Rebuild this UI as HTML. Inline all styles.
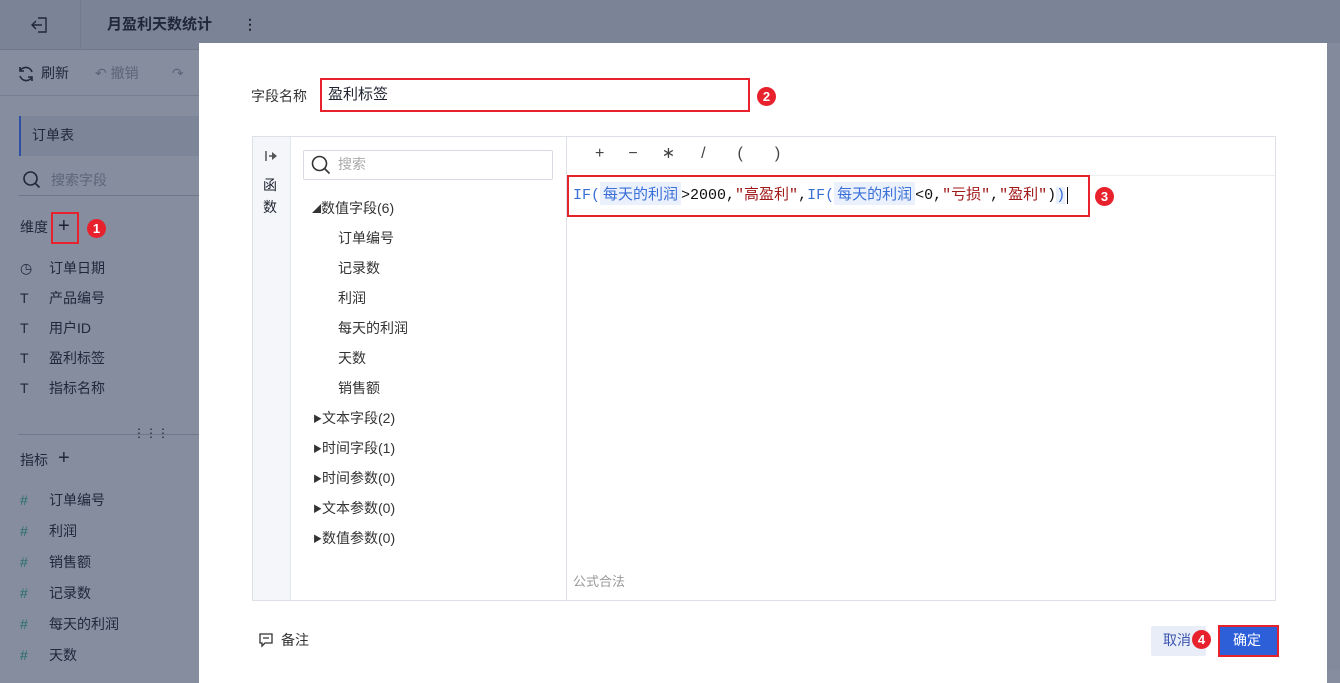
<!DOCTYPE html>
<html><head><meta charset="utf-8"><style>
*{box-sizing:border-box;margin:0;padding:0}
body{width:1340px;height:670px;overflow:hidden;position:relative;background:#858d9f;font-family:"Liberation Sans","Noto Sans CJK SC",sans-serif;font-size:14px;color:#1f2330}
.a{position:absolute}
.t{position:absolute;white-space:nowrap;line-height:20px}
.badge{position:absolute;width:19px;height:19px;border-radius:50%;background:#e8222d;color:#fff;font-size:13px;font-weight:bold;text-align:center;line-height:19px}
.red{position:absolute;border:2px solid #e8222d}
.sb{color:#20283a}
.mono{font-family:"Liberation Mono","Noto Sans CJK SC",monospace}
.tri{display:inline-block;width:9px;font-size:9px;vertical-align:1px}
</style></head><body>
<div class="a" style="left:0;top:0;width:1340px;height:50px;background:#7b8497;border-bottom:1px solid #6f788b"></div>
<div class="a" style="left:80px;top:0;width:1px;height:50px;background:#737c8f"></div>
<svg class="a" style="left:30px;top:15px" width="20" height="20" viewBox="0 0 20 20" fill="none" stroke="#1f2738" stroke-width="1.4"><path d="M8 3h8v14h-8M2 10h10M6 6l-4 4 4 4"/></svg>
<div class="t sb" style="left:107px;top:15px;font-size:15px;font-weight:bold">月盈利天数统计</div>
<div class="t" style="left:243px;top:14px;font-weight:bold">⋮</div>
<div class="a" style="left:0;top:95px;width:200px;height:1px;background:#767f92"></div>
<svg class="a" style="left:17px;top:65px" width="18" height="18" viewBox="0 0 18 18" fill="none" stroke="#20283a" stroke-width="1.6"><path d="M15 7A6.5 6.5 0 0 0 3 6M3 11a6.5 6.5 0 0 0 12 1M3 2v4h4M15 16v-4h-4"/></svg>
<div class="t sb" style="left:41px;top:63px">刷新</div>
<div class="t" style="left:95px;top:63px;color:#5c6578">↶ 撤销</div>
<div class="t" style="left:172px;top:63px;color:#5c6578">↷</div>
<div class="a" style="left:19px;top:116px;width:180px;height:40px;background:#7d8698;border-left:2px solid #2f4ea8"></div>
<div class="t sb" style="left:32px;top:125px">订单表</div>
<svg class="a" style="left:22px;top:170px" width="20" height="20" viewBox="0 0 20 20" fill="none" stroke="#1f2738" stroke-width="1.6"><circle cx="8.5" cy="8.5" r="6.5"/><path d="M13.5 13.5l4 4"/></svg>
<div class="t" style="left:51px;top:170px;color:#5d6679">搜索字段</div>
<div class="a" style="left:18px;top:195px;width:182px;height:1px;background:#6f788b"></div>
<div class="t sb" style="left:20px;top:217px">维度</div>
<div class="red" style="left:51px;top:212px;width:28px;height:32px"></div>
<div class="t" style="left:58px;top:216px;font-size:20px">+</div>
<div class="badge" style="left:87px;top:219px">1</div>
<div class="t sb" style="left:20px;top:253px;line-height:30px">◷<br>T<br>T<br>T<br>T</div>
<div class="t sb" style="left:49px;top:253px;line-height:30px">订单日期<br>产品编号<br>用户ID<br>盈利标签<br>指标名称</div>
<div class="a" style="left:18px;top:434px;width:182px;height:1px;background:#6f788b"></div>
<div class="t" style="left:133px;top:423px;font-size:12px">⋮⋮⋮</div>
<div class="t sb" style="left:20px;top:450px">指标</div>
<div class="t sb" style="left:58px;top:448px;font-size:20px">+</div>
<div class="t" style="left:20px;top:485px;line-height:31px;color:#2a6e6a">#<br>#<br>#<br>#<br>#<br>#</div>
<div class="t sb" style="left:49px;top:485px;line-height:31px">订单编号<br>利润<br>销售额<br>记录数<br>每天的利润<br>天数</div>
<div class="a" style="left:1327px;top:43px;width:13px;height:627px;background:#828a9c"></div>
<!-- modal -->
<div class="a" style="left:199px;top:43px;width:1128px;height:640px;background:#fff"></div>
<div class="t" style="left:251px;top:86px;color:#333">字段名称</div>
<div class="red" style="left:320px;top:78px;width:430px;height:34px"></div>
<div class="t" style="left:328px;top:85px;font-size:15px">盈利标签</div>
<div class="badge" style="left:757px;top:87px">2</div>
<div class="a" style="left:252px;top:136px;width:1024px;height:465px;border:1px solid #dde0e6"></div>
<div class="a" style="left:253px;top:137px;width:38px;height:463px;background:#f4f6f9;border-right:1px solid #e3e6ec"></div>
<svg class="a" style="left:264px;top:149px" width="14" height="14" viewBox="0 0 14 14"><path d="M2 2v10" stroke="#555" stroke-width="1.5"/><path d="M5 7h4" stroke="#555" stroke-width="1.5"/><path d="M8 3l5 4-5 4z" fill="#555"/></svg>
<div class="t" style="left:263px;top:174px;line-height:22px">函<br>数</div>
<div class="a" style="left:566px;top:137px;width:1px;height:463px;background:#dde0e6"></div>
<div class="a" style="left:303px;top:150px;width:250px;height:30px;border:1px solid #d6d9df;border-radius:2px"></div>
<svg class="a" style="left:310px;top:154px" width="22" height="22" viewBox="0 0 22 22" fill="none" stroke="#333" stroke-width="1.6"><circle cx="9.5" cy="9.5" r="7"/><path d="M14.5 14.5l5 5"/></svg>
<div class="t" style="left:338px;top:154px;color:#aaa">搜索</div>
<div class="t" style="left:312px;top:193px;line-height:30px;color:#333"><span class="tri">◢</span>数值字段(6)</div>
<div class="t" style="left:338px;top:223px;line-height:30px;color:#333">订单编号<br>记录数<br>利润<br>每天的利润<br>天数<br>销售额</div>
<div class="t" style="left:313px;top:403px;line-height:30px;color:#333"><span class="tri">▶</span>文本字段(2)</div>
<div class="t" style="left:313px;top:433px;line-height:30px;color:#333"><span class="tri">▶</span>时间字段(1)</div>
<div class="t" style="left:313px;top:463px;line-height:30px;color:#333"><span class="tri">▶</span>时间参数(0)</div>
<div class="t" style="left:313px;top:493px;line-height:30px;color:#333"><span class="tri">▶</span>文本参数(0)</div>
<div class="t" style="left:313px;top:523px;line-height:30px;color:#333"><span class="tri">▶</span>数值参数(0)</div>
<div class="a" style="left:567px;top:175px;width:708px;height:1px;background:#eceef2"></div>
<div class="t" style="left:595px;top:144px;font-size:16px;color:#444"><span style="margin-right:24px">+</span><span style="margin-right:24px">−</span><span style="margin-right:26px">∗</span><span style="margin-right:32px">/</span><span style="margin-right:32px">(</span>)</div>
<div class="red" style="left:567px;top:175px;width:523px;height:42px"></div>
<div class="t mono" style="left:573px;top:183px;font-size:15px;line-height:22px;color:#111"><span style="color:#3a6fd8">IF(</span><span style="background:#eaf1fc;color:#3a6fd8;padding:1px 3px;font-family:'Noto Sans CJK SC'">每天的利润</span>&gt;2000,<span style="color:#a01818">"高盈利"</span>,<span style="color:#3a6fd8">IF(</span><span style="background:#eaf1fc;color:#3a6fd8;padding:1px 3px;font-family:'Noto Sans CJK SC'">每天的利润</span>&lt;0,<span style="color:#a01818">"亏损"</span>,<span style="color:#a01818">"盈利"</span>)<span style="background:#eaf1fc;color:#3a6fd8">)</span><span style="border-left:1px solid #111;margin-left:2px"></span></div>
<div class="badge" style="left:1095px;top:187px">3</div>
<div class="t" style="left:573px;top:572px;color:#999;font-size:13px">公式合法</div>
<svg class="a" style="left:258px;top:632px" width="16" height="16" viewBox="0 0 16 16" fill="none" stroke="#333" stroke-width="1.3"><path d="M2 2h12v9H7l-3 3v-3H2z M5 6h6"/></svg>
<div class="t" style="left:281px;top:630px;color:#333">备注</div>
<div class="a" style="left:1151px;top:626px;width:55px;height:30px;background:#e8edf8;border-radius:2px"></div>
<div class="t" style="left:1163px;top:630px;color:#3c55b0">取消</div>
<div class="badge" style="left:1192px;top:630px">4</div>
<div class="a" style="left:1218px;top:625px;width:61px;height:32px;background:#2d5fd9;border:2px solid #e8222d"></div>
<div class="t" style="left:1233px;top:630px;color:#fff">确定</div>
</body></html>
